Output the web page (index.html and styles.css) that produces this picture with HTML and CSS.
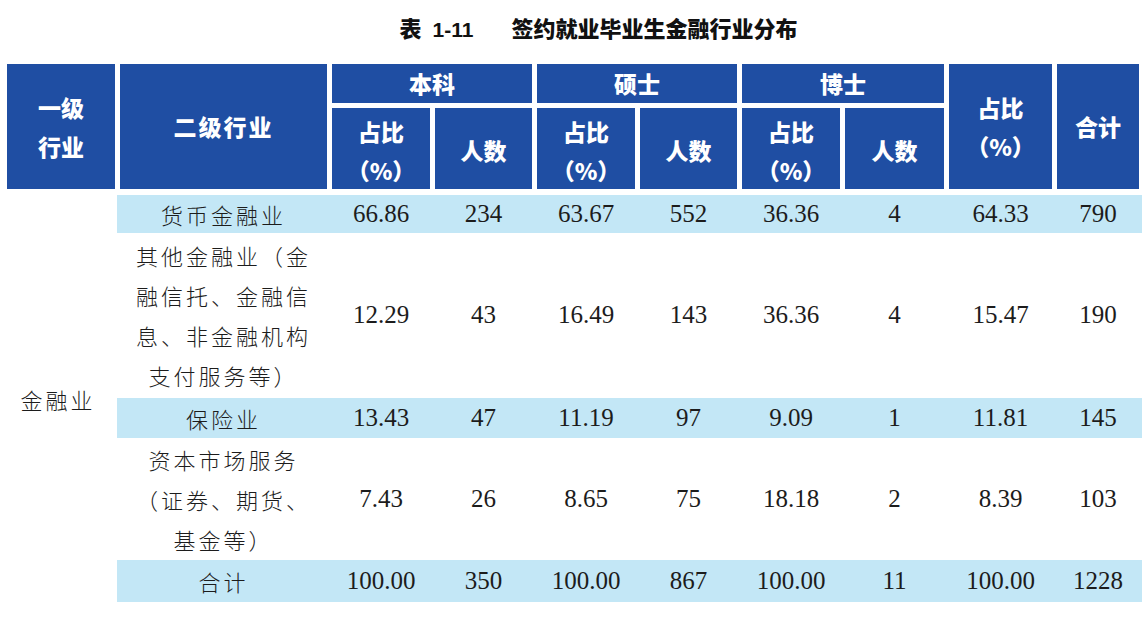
FILE: index.html
```html
<!DOCTYPE html>
<html lang="zh-CN">
<head>
<meta charset="utf-8">
<title>表 1-11 签约就业毕业生金融行业分布</title>
<link rel="stylesheet" href="styles.css">
</head>
<body>
<div class="page">
  <h1 class="title"><span class="t-no">表 <span class="num">1-11</span></span><span class="t-name">签约就业毕业生金融行业分布</span></h1>

  <div class="head">
    <div class="h c-l1">一级<br>行业</div>
    <div class="h c-l2">二级行业</div>
    <div class="h g-bk">本科</div>
    <div class="h g-ss">硕士</div>
    <div class="h g-bs">博士</div>
    <div class="h c-pct">占比<br>（%）</div>
    <div class="h c-sum">合计</div>
    <div class="h sub">占比<br>（%）</div>
    <div class="h sub">人数</div>
    <div class="h sub">占比<br>（%）</div>
    <div class="h sub">人数</div>
    <div class="h sub">占比<br>（%）</div>
    <div class="h sub">人数</div>
  </div>

  <div class="tbody">
    <div class="l1 cn">金融业</div>
    <div class="rows">
      <div class="row stripe r-single">
        <div class="cn">货币金融业</div><div>66.86</div><div>234</div><div>63.67</div><div>552</div><div>36.36</div><div>4</div><div>64.33</div><div>790</div>
      </div>
      <div class="row r-multi4">
        <div class="cn">其他金融业（金<br>融信托、金融信<br>息、非金融机构<br>支付服务等）</div><div>12.29</div><div>43</div><div>16.49</div><div>143</div><div>36.36</div><div>4</div><div>15.47</div><div>190</div>
      </div>
      <div class="row stripe r-single">
        <div class="cn">保险业</div><div>13.43</div><div>47</div><div>11.19</div><div>97</div><div>9.09</div><div>1</div><div>11.81</div><div>145</div>
      </div>
      <div class="row r-multi3">
        <div class="cn">资本市场服务<br>（证券、期货、<br>基金等）</div><div>7.43</div><div>26</div><div>8.65</div><div>75</div><div>18.18</div><div>2</div><div>8.39</div><div>103</div>
      </div>
      <div class="row stripe r-single r-total">
        <div class="cn">合计</div><div>100.00</div><div>350</div><div>100.00</div><div>867</div><div>100.00</div><div>11</div><div>100.00</div><div>1228</div>
      </div>
    </div>
  </div>
</div>
</body>
</html>
```

FILE: styles.css
```css
html, body {
  margin: 0;
  padding: 0;
  background: #ffffff;
}

.page {
  width: 1144px;
  height: 644px;
  padding-left: 7px;
  box-sizing: border-box;
  overflow: hidden;
}

.title {
  margin: 0;
  height: 64px;
  line-height: 54px;
  padding-left: 46px;
  text-align: center;
  font-family: "Noto Sans CJK SC", sans-serif;
  font-weight: 900;
  font-size: 22px;
  color: #111;
  box-sizing: border-box;
}

.t-no {
  display: inline-block;
  margin-right: 38px;
}

.t-no .num {
  font-family: "Liberation Sans", sans-serif;
  font-weight: 700;
  font-size: 21px;
  margin-left: 6px;
}

.t-name {
  letter-spacing: 0;
}

/* header */
.head {
  display: grid;
  grid-template-columns: 108px 207px 98px 97px 98px 97px 98px 99px 103px 82px;
  grid-template-rows: 39px 81px;
  gap: 5px;
  width: 1132px;
}

.h {
  background: #1f4ea3;
  color: #ffffff;
  font-family: "Noto Sans CJK SC", sans-serif;
  font-weight: 900;
  font-size: 23px;
  line-height: 39px;
  display: flex;
  align-items: center;
  justify-content: center;
  text-align: center;
}

.c-l1 { grid-column: 1; grid-row: 1 / 3; }
.c-l2 { grid-column: 2; grid-row: 1 / 3; letter-spacing: 2px; }
.g-bk { grid-column: 3 / 5; grid-row: 1; }
.g-ss { grid-column: 5 / 7; grid-row: 1; }
.g-bs { grid-column: 7 / 9; grid-row: 1; }
.c-pct { grid-column: 9; grid-row: 1 / 3; }
.c-sum { grid-column: 10; grid-row: 1 / 3; }
.sub { grid-row: 2; padding-top: 4px; }

/* body */
.tbody {
  display: grid;
  grid-template-columns: 108px 1019px;
  column-gap: 5px;
  margin-top: 6px;
  font-family: "Liberation Serif", "Noto Sans CJK SC", serif;
  font-size: 25px;
  color: #1c1c1c;
}

.cn {
  font-family: "Noto Sans CJK SC", sans-serif;
  font-size: 22px;
  font-weight: 300;
  letter-spacing: 3px;
}

.l1 {
  display: flex;
  align-items: center;
  justify-content: center;
  padding-right: 6px;
}

.rows {
  display: flex;
  flex-direction: column;
}

.row {
  display: grid;
  grid-template-columns: 207px 98px 97px 98px 97px 98px 99px 103px 82px;
  column-gap: 5px;
  margin: 0 -3px;
  padding: 0 3px;
  line-height: 40px;
}

.row > div {
  display: flex;
  align-items: center;
  justify-content: center;
  text-align: center;
}

.stripe {
  background: #c3e7f6;
}

.r-single { height: 40px; }
.r-single:first-child { height: 38px; line-height: 38px; }
.r-multi4 { padding-top: 2px; padding-bottom: 3px; }
.r-multi3 { padding-top: 1px; padding-bottom: 1px; }
.r-total { height: 42px; }
```
